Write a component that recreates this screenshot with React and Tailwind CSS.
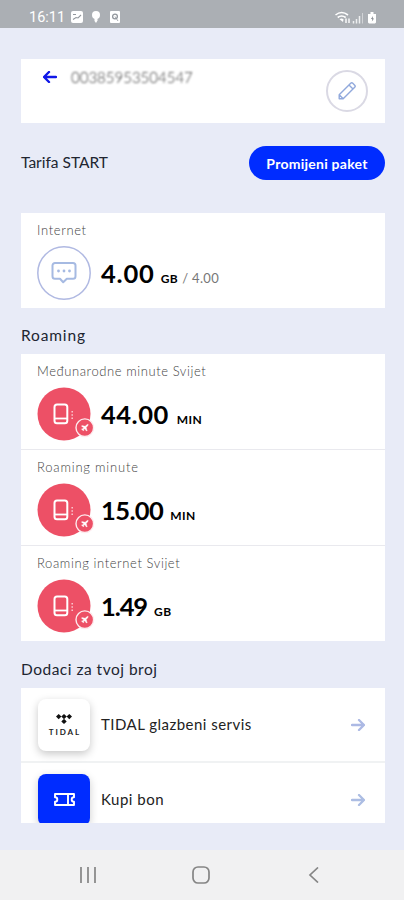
import React from 'react';
import { Plane } from 'lucide-react';

const ROAMING = [
  { label: 'Međunarodne minute Svijet', value: '44.00', unit: 'MIN', labelClass: 'tracking-[0.58px]', valueClass: 'tracking-[0.5px]', unitClass: 'ml-[8px]' },
  { label: 'Roaming minute', value: '15.00', unit: 'MIN', labelClass: 'tracking-[0.8px]', valueClass: 'tracking-[-0.6px]', unitClass: 'ml-[7px]' },
  { label: 'Roaming internet Svijet', value: '1.49', unit: 'GB', labelClass: 'tracking-[0.6px]', valueClass: 'tracking-[-1.1px]', unitClass: 'ml-[7px]' },
];

function StatusBar() {
  return (
    <div className="flex h-7 shrink-0 items-center bg-[#abafb4] pt-[6px] pr-[26px] pl-[29px] text-white">
      <span className="w-[36px] pt-[3px] font-[Roboto] text-[14.5px] leading-none">16:11</span>
      <svg className="ml-[6px] h-3 w-3" viewBox="0 0 12 12">
        <rect width="12" height="12" rx="2" fill="white" />
        <path d="M2 8.500 5 6.500l2 .5L10 4M2 3.500h3" fill="none" stroke="#92979d" strokeWidth="1.1" />
      </svg>
      <svg className="ml-[9px] h-3 w-2" viewBox="0 0 8 12">
        <circle cx="4" cy="4" r="4" fill="white" />
        <path d="M2.5 7h3v2.5L4 12 2.5 10z" fill="white" />
      </svg>
      <svg className="ml-[10px] h-3 w-[10px]" viewBox="0 0 10 12">
        <rect width="10" height="12" rx="1" fill="white" />
        <circle cx="5" cy="5.5" r="2.4" fill="none" stroke="#92979d" strokeWidth="1.3" />
        <path d="M5 5.5 8 10" stroke="#92979d" strokeWidth="0.8" />
      </svg>
      <svg className="ml-auto h-[13px] w-[43px]" viewBox="0 0 43 13" fill="none">
        <path d="M.5 4q6-5 12.500 0M2.700 6.500q3.800-3 8 0" stroke="white" strokeWidth="1.6" />
        <path d="M4.500 8.200q2-1.500 4 0L8 11z" fill="white" />
        <path d="M11 7.500v4.500M14 7.500v4.500" stroke="white" strokeWidth="1.4" />
        <path d="M18.500 10v2.500M21.500 8v4.500M24.500 5v7.500" stroke="white" strokeWidth="1.5" strokeOpacity="0.8" />
        <path d="M27.500 2v10.500" stroke="white" strokeOpacity="0.45" />
        <path d="M35.500 1h3v2h2.500v8.500l-1 1h-6l-1-1V3h2.500z" fill="white" />
        <path d="m38 5-2 3h1.400l-.6 2.600 2.200-3.200h-1.400z" fill="#777c83" />
      </svg>
    </div>
  );
}

function Arrow({ className }) {
  return (
    <svg className={className} viewBox="0 0 14 12" fill="none" stroke="currentColor" strokeLinecap="round" strokeLinejoin="round">
      <path d="M1 6h12M8 1l5 5-5 5" />
    </svg>
  );
}

function ChatIcon() {
  return (
    <svg className="h-[54px] w-[54px] shrink-0" viewBox="0 0 54 54" fill="none">
      <circle cx="27" cy="27" r="26.200" stroke="#b0b9e2" strokeWidth="1.5" />
      <path
        d="M18 17h18a2.500 2.500 0 0 1 2.500 2.500v10.800a2.500 2.500 0 0 1-2.500 2.500h-6.200l-3.600 3.400-3.200-3.400h-5a2.500 2.500 0 0 1-2.500-2.500V19.500A2.500 2.500 0 0 1 18 17z"
        stroke="#a6bae2"
        strokeWidth="2"
        strokeLinejoin="round"
      />
      <g fill="#a6bae2">
        <circle cx="21.500" cy="25" r="1.4" />
        <circle cx="27" cy="25" r="1.4" />
        <circle cx="32.500" cy="25" r="1.4" />
      </g>
    </svg>
  );
}

function RoamingIcon() {
  return (
    <svg className="h-[54px] w-[58px] shrink-0" viewBox="0 0 58 54" fill="none">
      <circle cx="27" cy="27" r="26.500" fill="#ed5066" />
      <rect x="17.500" y="17.500" width="12.800" height="18.800" rx="2.500" stroke="white" strokeWidth="2" />
      <path d="M18 31.500h12" stroke="white" strokeWidth="1.8" />
      <path d="M35.200 24v1.600M35.200 27.200v1.600M35.200 30.400v1.600" stroke="white" strokeOpacity="0.7" strokeWidth="1.5" />
      <circle cx="47.800" cy="40.700" r="8.800" fill="#ed5066" stroke="#fdebee" strokeWidth="1.4" />
      <Plane x="43.300" y="36.200" width="9" height="9" fill="white" stroke="white" strokeWidth="0.8" />
    </svg>
  );
}

function UsageRow({ icon, label, labelClass, value, valueClass, unit, unitClass, total }) {
  return (
    <div className="h-full pl-4">
      <div className={`pt-[9px] text-[13px] leading-4 font-light text-[#444] ${labelClass}`}>{label}</div>
      <div className="mt-2 flex h-[54px] items-center">
        <div className="w-16 shrink-0">{icon}</div>
        <div className="flex items-baseline whitespace-nowrap text-black">
          <span className={`text-[25.5px] leading-8 font-bold ${valueClass}`}>{value}</span>
          <span className={`text-[12px] font-bold tracking-[0.5px] ${unitClass}`}>{unit}</span>
          {total ? <span className="ml-1 text-[13px] tracking-[0.3px] text-[#777]">/ {total}</span> : null}
        </div>
      </div>
    </div>
  );
}

function TidalTile() {
  return (
    <div className="flex h-[52px] w-[52px] flex-col items-center rounded-lg bg-white pt-[15px] shadow-[0_3px_8px_rgba(0,0,0,0.22)]">
      <svg className="h-[10px] w-4" viewBox="0 0 16 10" fill="#111">
        <path d="m2.700 0 2.700 2.600-2.700 2.600L0 2.600zM8 0l2.700 2.600L8 5.200 5.300 2.600zM13.300 0 16 2.600l-2.700 2.600-2.700-2.600zM8 4.800l2.700 2.600L8 10 5.300 7.400z" />
      </svg>
      <span className="mt-1 pl-[2px] text-[8px] leading-[8px] font-bold tracking-[1.9px] text-[#222]">TIDAL</span>
    </div>
  );
}

function VoucherTile() {
  return (
    <div className="flex h-[52px] w-[52px] justify-center rounded-lg bg-[#002cff] pt-[19px] shadow-[0_3px_8px_rgba(0,0,0,0.2)]">
      <svg className="h-[13px] w-[21px]" viewBox="0 0 21 13" fill="none" stroke="white" strokeWidth="1.9" strokeLinejoin="round">
        <path d="M1 1h19v3.200a2.300 2.300 0 0 0 0 4.600V12H1V8.800a2.300 2.300 0 0 0 0-4.600zM14 1v11" />
      </svg>
    </div>
  );
}

function SectionTitle({ className, children }) {
  return <h2 className={`text-[15.5px] leading-5 text-[#202530] ${className}`}>{children}</h2>;
}

function NavBar() {
  return (
    <div className="flex h-[50px] shrink-0 items-center bg-[#f1f1f2] pl-[79px] text-[#858585]">
      <svg className="h-4 w-[18px]" viewBox="0 0 18 16" stroke="currentColor" strokeWidth="1.7">
        <path d="M2 0v16M9 0v16M16 0v16" />
      </svg>
      <svg className="ml-[95px] h-[18px] w-[18px]" viewBox="0 0 18 18" fill="none" stroke="currentColor" strokeWidth="1.7">
        <rect x="1" y="1" width="16" height="16" rx="5" />
      </svg>
      <svg className="ml-[98px] h-4 w-[11px]" viewBox="0 0 11 16" fill="none" stroke="currentColor" strokeWidth="1.7">
        <path d="m10 .5-8 7.500 8 7.500" />
      </svg>
    </div>
  );
}

export default function App() {
  return (
    <div className="flex h-[900px] w-[404px] flex-col overflow-hidden bg-[#e8ebf7] font-['Lato',sans-serif]">
      <StatusBar />
      <main className="flex-1 overflow-hidden pr-[19px] pl-[21px]">
        <div className="mt-[31px] flex h-16 bg-white pr-[17px] pl-[22px]">
          <Arrow className="mt-3 h-3 w-[14px] rotate-180 stroke-[2.4] text-[#1018e8]" />
          <span className="mt-[9px] ml-[14px] text-[15px] leading-[18px] font-light text-[#333] blur-[1.3px]">00385953504547</span>
          <div className="mt-[11px] ml-auto flex h-[42px] w-[42px] items-center justify-center rounded-full border-2 border-[#dad9e4]">
            <svg className="h-[18px] w-[18px]" viewBox="0 0 18 18" fill="none" stroke="#91a9dc" strokeWidth="1.4" strokeLinejoin="round">
              <path d="M1.200 16.800V12.800L12.700 1.300a1.500 1.500 0 0 1 2.100 0l1.900 1.900a1.500 1.500 0 0 1 0 2.100L5.200 16.800zM11 3l4 4M1.200 12.800l4 4" />
            </svg>
          </div>
        </div>

        <div className="mt-[23px] flex h-[34px] items-center justify-between">
          <SectionTitle className="pb-[2px]">Tarifa START</SectionTitle>
          <button className="h-[34px] w-[136px] rounded-full bg-[#002cff] text-[14px] font-bold tracking-[0.25px] text-white">Promijeni paket</button>
        </div>

        <div className="mt-[33px] h-[95px] bg-white">
          <UsageRow
            icon={<ChatIcon />}
            label="Internet"
            labelClass="tracking-[0.65px]"
            value="4.00"
            valueClass="tracking-[0.8px]"
            unit="GB"
            unitClass="ml-[6px]"
            total="4.00"
          />
        </div>

        <SectionTitle className="mt-[17px] mb-[9px] tracking-[0.85px]">Roaming</SectionTitle>
        <div className="h-[287px] divide-y divide-[#e9e9ee] bg-white">
          {ROAMING.map((item) => (
            <div key={item.label} className="h-24">
              <UsageRow icon={<RoamingIcon />} {...item} />
            </div>
          ))}
        </div>

        <SectionTitle className="mt-[18px] tracking-[0.5px]">Dodaci za tvoj broj</SectionTitle>
        <div className="mt-[9px] h-[135px] overflow-hidden bg-white text-[15px] text-[#222]">
          <div className="flex h-[75px] items-center border-b-2 border-[#f0f2f3] pr-5 pl-[17px]">
            <TidalTile />
            <span className="ml-[11px] tracking-[0.47px]">TIDAL glazbeni servis</span>
            <Arrow className="ml-auto h-3 w-[14px] stroke-[2.3] text-[#acb9e4]" />
          </div>
          <div className="flex h-[73px] items-center pr-5 pl-[17px]">
            <VoucherTile />
            <span className="ml-[11px] tracking-[0.5px]">Kupi bon</span>
            <Arrow className="ml-auto h-3 w-[14px] stroke-[2.3] text-[#acbde3]" />
          </div>
        </div>
      </main>
      <NavBar />
    </div>
  );
}
